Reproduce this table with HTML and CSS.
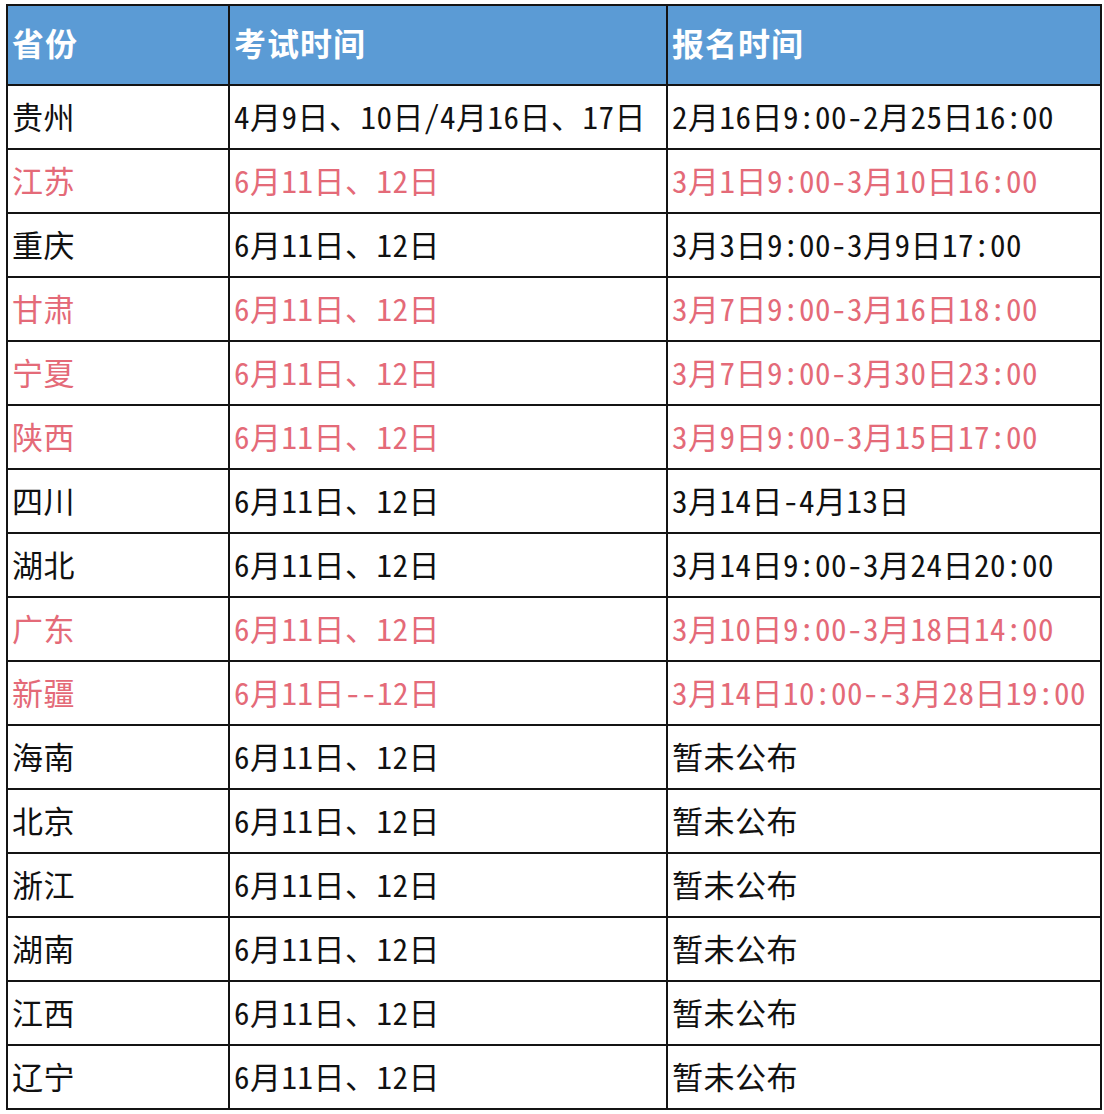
FILE: index.html
```html
<!DOCTYPE html>
<html lang="zh-CN">
<head>
<meta charset="utf-8">
<link rel="stylesheet" href="styles.css">
</head>
<body>
<table class="sched">
  <colgroup><col class="c1"><col class="c2"><col class="c3"></colgroup>
  <thead>
    <tr class="head"><th>省份</th><th>考试时间</th><th>报名时间</th></tr>
  </thead>
  <tbody>
    <tr><td>贵州</td><td>4月9日、10日/4月16日、17日</td><td>2月16日9:00-2月25日16:00</td></tr>
    <tr class="red"><td>江苏</td><td>6月11日、12日</td><td>3月1日9:00-3月10日16:00</td></tr>
    <tr><td>重庆</td><td>6月11日、12日</td><td>3月3日9:00-3月9日17:00</td></tr>
    <tr class="red"><td>甘肃</td><td>6月11日、12日</td><td>3月7日9:00-3月16日18:00</td></tr>
    <tr class="red"><td>宁夏</td><td>6月11日、12日</td><td>3月7日9:00-3月30日23:00</td></tr>
    <tr class="red"><td>陕西</td><td>6月11日、12日</td><td>3月9日9:00-3月15日17:00</td></tr>
    <tr><td>四川</td><td>6月11日、12日</td><td>3月14日-4月13日</td></tr>
    <tr><td>湖北</td><td>6月11日、12日</td><td>3月14日9:00-3月24日20:00</td></tr>
    <tr class="red"><td>广东</td><td>6月11日、12日</td><td>3月10日9:00-3月18日14:00</td></tr>
    <tr class="red"><td>新疆</td><td>6月11日--12日</td><td>3月14日10:00--3月28日19:00</td></tr>
    <tr><td>海南</td><td>6月11日、12日</td><td>暂未公布</td></tr>
    <tr><td>北京</td><td>6月11日、12日</td><td>暂未公布</td></tr>
    <tr><td>浙江</td><td>6月11日、12日</td><td>暂未公布</td></tr>
    <tr><td>湖南</td><td>6月11日、12日</td><td>暂未公布</td></tr>
    <tr><td>江西</td><td>6月11日、12日</td><td>暂未公布</td></tr>
    <tr><td>辽宁</td><td>6月11日、12日</td><td>暂未公布</td></tr>
  </tbody>
</table>
</body>
</html>
```

FILE: styles.css
```css
html, body {
  margin: 0;
  padding: 0;
  background: #ffffff;
}
body {
  padding: 4px 0 0 6px;
  font-family: "Noto Sans CJK SC", "Noto Sans", sans-serif;
}
.sched {
  border-collapse: collapse;
  table-layout: fixed;
  width: 1094px;
  border: 2px solid #141414;
}
.c1 { width: 222px; }
.c2 { width: 438px; }
.c3 { width: 434px; }
.sched th,
.sched td {
  border: 2px solid #141414;
  text-align: left;
  white-space: nowrap;
  overflow: hidden;
  line-height: 1;
  font-feature-settings: "hwid" 1;
}
.sched th {
  height: 72px;
  padding: 0 0 6px 4px;
  background: #5b9bd5;
  color: #ffffff;
  font-size: 32px;
  letter-spacing: 1px;
  font-weight: 700;
  vertical-align: middle;
}
.sched td {
  height: 58px;
  padding: 0 0 4px 4px;
  color: #111111;
  font-size: 31px;
  letter-spacing: 0.5px;
  font-weight: 400;
  vertical-align: middle;
}
.sched tr.red td {
  color: #e46a78;
}
```
